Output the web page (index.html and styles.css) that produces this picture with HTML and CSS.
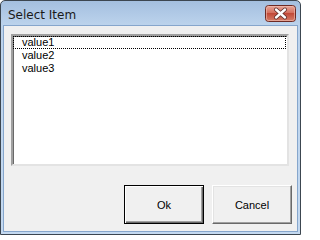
FILE: index.html
```html
<!DOCTYPE html>
<html>
<head>
<meta charset="utf-8">
<link rel="stylesheet" href="styles.css">
</head>
<body>
<div class="window">
  <div class="titlebar">
    <span class="title">Select Item</span>
    <div class="close">
      <svg width="31" height="17" viewBox="0 0 31 17">
        <defs>
          <linearGradient id="cg" x1="0" y1="0" x2="0" y2="1">
            <stop offset="0" stop-color="#e9a99b"/>
            <stop offset="0.45" stop-color="#d4705f"/>
            <stop offset="0.5" stop-color="#c24a38"/>
            <stop offset="1" stop-color="#d6806b"/>
          </linearGradient>
        </defs>
        <rect x="0.5" y="0.5" width="30" height="16" rx="3" fill="url(#cg)" stroke="#6e2a23"/>
        <rect x="1.5" y="1.5" width="28" height="14" rx="2" fill="none" stroke="#f0c0b4" stroke-opacity="0.6"/>
        <path d="M11 4.5 L20 12.5 M20 4.5 L11 12.5" stroke="#5a2a26" stroke-width="4" stroke-linecap="round"/>
        <path d="M11 4.5 L20 12.5 M20 4.5 L11 12.5" stroke="#ffffff" stroke-width="2.4" stroke-linecap="round"/>
      </svg>
    </div>
  </div>
  <div class="client">
    <div class="listbox">
      <div class="item focused">value1</div>
      <div class="item">value2</div>
      <div class="item">value3</div>
    </div>
    <div class="buttons">
      <button class="btn default">Ok</button>
      <button class="btn">Cancel</button>
    </div>
  </div>
</div>
</body>
</html>
```
FILE: styles.css
```css
html, body {
  margin: 0;
  padding: 0;
  background: #ffffff;
}
.window {
  width: 301px;
  height: 235px;
  box-sizing: border-box;
  border: 1px solid #3c4650;
  border-radius: 5px 5px 0 0;
  background: linear-gradient(#a4bfdf, #bcd3ec 24px, #c4d9f0);
  display: flex;
  flex-direction: column;
  font-family: "Liberation Sans", Arial, sans-serif;
}
.titlebar {
  height: 24px;
  display: flex;
  justify-content: space-between;
  align-items: flex-start;
  padding: 0 4px 0 7px;
}
.title {
  font-family: "DejaVu Sans", "Liberation Sans", sans-serif;
  font-size: 12px;
  line-height: 12px;
  color: #1a1a1a;
  margin-top: 8px;
}
.close {
  margin-top: 4px;
  height: 17px;
}
.close svg {
  display: block;
}
.client {
  flex: 1;
  margin: 0 2px 2px 2px;
  border: 1px solid #86a6cc;
  background: #f0f0f0;
  display: flex;
  flex-direction: column;
  padding: 8px 5px 7px 7px;
}
.listbox {
  width: 278px;
  height: 132px;
  box-sizing: border-box;
  background: #ffffff;
  border-style: solid;
  border-width: 2px;
  border-color: #a0a0a0 #e3e3e3 #e3e3e3 #a0a0a0;
  box-shadow: inset 1px 1px 0 #696969;
  padding: 0;
}
.item {
  height: 13px;
  box-sizing: border-box;
  margin-left: 0;
  padding-left: 9px;
  font-size: 11px;
  line-height: 12px;
  color: #000000;
}
.item.focused {
  outline: 1px dotted #000000;
  outline-offset: -1px;
  margin: 0 1px 0 0;
}
.buttons {
  margin-top: 19px;
  display: flex;
  justify-content: flex-end;
  gap: 8px;
}
.btn {
  width: 80px;
  height: 39px;
  box-sizing: border-box;
  background: #f0f0f0;
  font-family: "Liberation Sans", Arial, sans-serif;
  font-size: 11px;
  color: #000000;
  padding: 0;
  border-style: solid;
  border-width: 1px;
  border-color: #ffffff #696969 #696969 #ffffff;
  box-shadow: inset -1px -1px 0 #a0a0a0, inset 1px 1px 0 #e3e3e3;
}
.btn.default {
  border: 1px solid #000000;
  box-shadow: inset 1px 1px 0 #ffffff, inset -1px -1px 0 #696969, inset -2px -2px 0 #a0a0a0;
}
```
